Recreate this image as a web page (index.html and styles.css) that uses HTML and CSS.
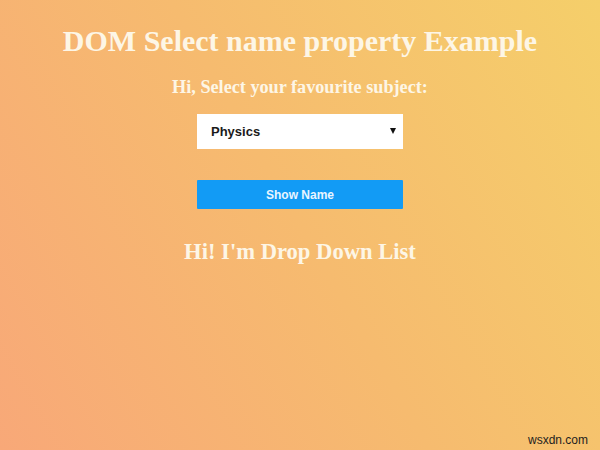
FILE: index.html
```html
<!DOCTYPE html>
<html>
<head>
<meta charset="utf-8">
<link rel="stylesheet" href="styles.css">
</head>
<body>
<main class="page">
  <h1 class="title">DOM Select name property Example</h1>
  <h3 class="prompt">Hi, Select your favourite subject:</h3>
  <div class="select-wrap">
    <select class="subject" name="Drop Down List">
      <option>Physics</option>
      <option>Maths</option>
      <option>Chemistry</option>
    </select>
  </div>
  <button class="show-btn">Show Name</button>
  <h2 class="result">Hi! I'm Drop Down List</h2>
</main>
<div class="watermark">wsxdn.com</div>
</body>
</html>
```
FILE: styles.css
```css
html, body {
  margin: 0;
  height: 100%;
}
body {
  width: 600px;
  height: 450px;
  overflow: hidden;
  position: relative;
  background: linear-gradient(60deg, #f8a878 0%, #f6bb6f 50%, #f5cf6a 100%);
  font-family: "Liberation Serif", "Times New Roman", serif;
}
.page {
  display: flex;
  flex-direction: column;
  align-items: center;
  text-align: center;
  color: #fdf6e6;
}
.title {
  margin: 22px 0 0;
  font-size: 30px;
  line-height: 37px;
  font-weight: bold;
}
.prompt {
  margin: 17px 0 0;
  font-size: 18.2px;
  line-height: 22px;
  font-weight: bold;
}
.select-wrap {
  position: relative;
  margin-top: 16px;
  width: 206px;
  height: 35px;
}
.select-wrap::after {
  content: "";
  position: absolute;
  right: 7px;
  top: 14px;
  width: 0;
  height: 0;
  border-left: 3.5px solid transparent;
  border-right: 3.5px solid transparent;
  border-top: 6px solid #111;
  pointer-events: none;
}
.subject {
  appearance: none;
  -webkit-appearance: none;
  width: 206px;
  height: 35px;
  margin: 0;
  border: none;
  background: #fff;
  padding: 0 0 0 14px;
  font-family: "Liberation Sans", Arial, sans-serif;
  font-size: 13px;
  font-weight: bold;
  color: #1a1a1a;
  border-radius: 0;
}
.show-btn {
  margin-top: 31px;
  width: 206px;
  height: 29px;
  border: none;
  border-radius: 1px;
  background: #129bf5;
  color: #e9f5ff;
  font-family: "Liberation Sans", Arial, sans-serif;
  font-size: 12px;
  font-weight: bold;
  padding: 0;
}
.result {
  margin: 30px 0 0;
  font-size: 22.6px;
  line-height: 26px;
  font-weight: bold;
}
.watermark {
  position: absolute;
  right: 12px;
  bottom: 3px;
  font-family: "Liberation Sans", Arial, sans-serif;
  font-size: 12px;
  color: #1e1e1e;
}
```
